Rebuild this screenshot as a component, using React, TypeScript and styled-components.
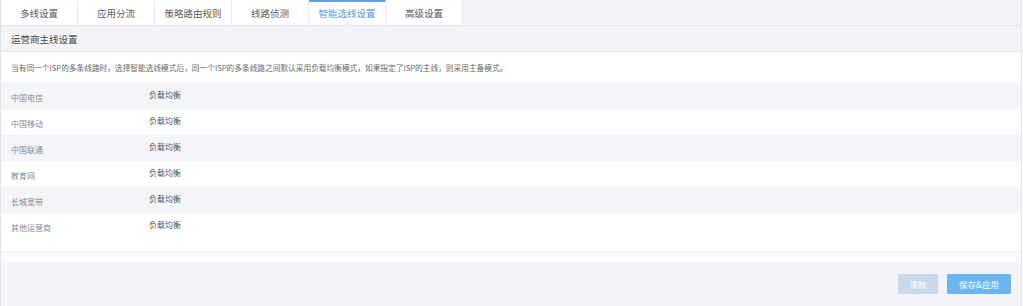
import styled, { createGlobalStyle } from "styled-components";

const GlobalStyle = createGlobalStyle`
  html, body {
    margin: 0;
    padding: 0;
    background: #fff;
    font-family: "Noto Sans CJK SC", "Noto Sans", sans-serif;
  }
`;

const tabs = ["多线设置", "应用分流", "策略路由规则", "线路侦测", "智能选线设置", "高级设置"];
const activeTab = 4;

const isps = ["中国电信", "中国移动", "中国联通", "教育网", "长城宽带", "其他运营商"];

const Panel = styled.div`
  width: 1022px;
  height: 306px;
  border-left: 1px solid #e2e4e8;
  border-right: 1px solid #e2e4e8;
  display: flex;
  flex-direction: column;
  box-sizing: border-box;
`;

const TabBar = styled.div`
  display: flex;
  height: 26px;
  box-sizing: border-box;
  background: #f3f4f7;
  border-bottom: 1px solid #e2e4e8;
`;

const Tab = styled.div<{ $active?: boolean }>`
  position: relative;
  width: 77px;
  box-sizing: border-box;
  border-right: 1px solid #e6e8eb;
  border-top: 2px solid ${(p) => (p.$active ? "#5ea3e4" : "transparent")};
  background: #fff;
  display: flex;
  align-items: center;
  justify-content: center;
  font-size: 9.5px;
  color: ${(p) => (p.$active ? "#5a9ad8" : "#5c5c5c")};
  padding-bottom: 1px;

  ${(p) =>
    p.$active &&
    `
    &::before {
      content: "";
      position: absolute;
      left: 50%;
      bottom: -1px;
      margin-left: -4px;
      border: 4px solid transparent;
      border-bottom-color: #dfe2e6;
      border-top: 0;
    }
    &::after {
      content: "";
      position: absolute;
      left: 50%;
      bottom: -1px;
      margin-left: -3px;
      border: 3px solid transparent;
      border-bottom-color: #f3f4f7;
      border-top: 0;
    }
  `}
`;

const SectionHeader = styled.div`
  height: 26px;
  box-sizing: border-box;
  background: #f3f4f7;
  border-bottom: 1px solid #e6e8eb;
  display: flex;
  align-items: center;
  padding: 0 10px;
  font-size: 9.5px;
  color: #4a4a4a;
`;

const Content = styled.div`
  background: #fff;
  border-bottom: 1px solid #eef0f2;
  padding-bottom: 12px;
`;

const Description = styled.div`
  height: 31px;
  display: flex;
  align-items: center;
  padding: 0 10px;
  font-size: 7.7px;
  color: #6a6a6a;
`;

const Row = styled.div<{ $striped?: boolean }>`
  display: flex;
  align-items: center;
  height: 26px;
  padding: 0 10px;
  background: ${(p) => (p.$striped ? "#f4f5f8" : "#fff")};
`;

const Label = styled.div`
  width: 138px;
  font-size: 8px;
  color: #8c8c8c;
  padding-top: 2px;
`;

const Value = styled.div`
  font-size: 8px;
  color: #555;
  padding-bottom: 3px;
`;

const Spacer = styled.div`
  height: 11px;
  background: #fbfbfc;
`;

const Footer = styled.div`
  flex: 1;
  background: #f3f4f7;
  display: flex;
  justify-content: flex-end;
  align-items: flex-start;
  gap: 9px;
  padding: 11px 10px 0 0;
`;

const Button = styled.button<{ $primary?: boolean }>`
  height: 20px;
  min-width: ${(p) => (p.$primary ? "64px" : "40px")};
  border: none;
  border-radius: 1px;
  padding: 0;
  font-family: inherit;
  font-size: 8.5px;
  color: #fff;
  background: ${(p) => (p.$primary ? "#6cb5f0" : "#c9d8ea")};
  cursor: pointer;
`;

export default function App() {
  return (
    <>
      <GlobalStyle />
      <Panel>
        <TabBar>
          {tabs.map((t, i) => (
            <Tab key={t} $active={i === activeTab}>
              {t}
            </Tab>
          ))}
        </TabBar>
        <SectionHeader>运营商主线设置</SectionHeader>
        <Content>
          <Description>
            当有同一个ISP的多条线路时，选择智能选线模式后，同一个ISP的多条线路之间默认采用负载均衡模式，如果指定了ISP的主线，则采用主备模式。
          </Description>
          {isps.map((name, i) => (
            <Row key={name} $striped={i % 2 === 0}>
              <Label>{name}</Label>
              <Value>负载均衡</Value>
            </Row>
          ))}
        </Content>
        <Spacer />
        <Footer>
          <Button>清除</Button>
          <Button $primary>保存&amp;应用</Button>
        </Footer>
      </Panel>
    </>
  );
}
